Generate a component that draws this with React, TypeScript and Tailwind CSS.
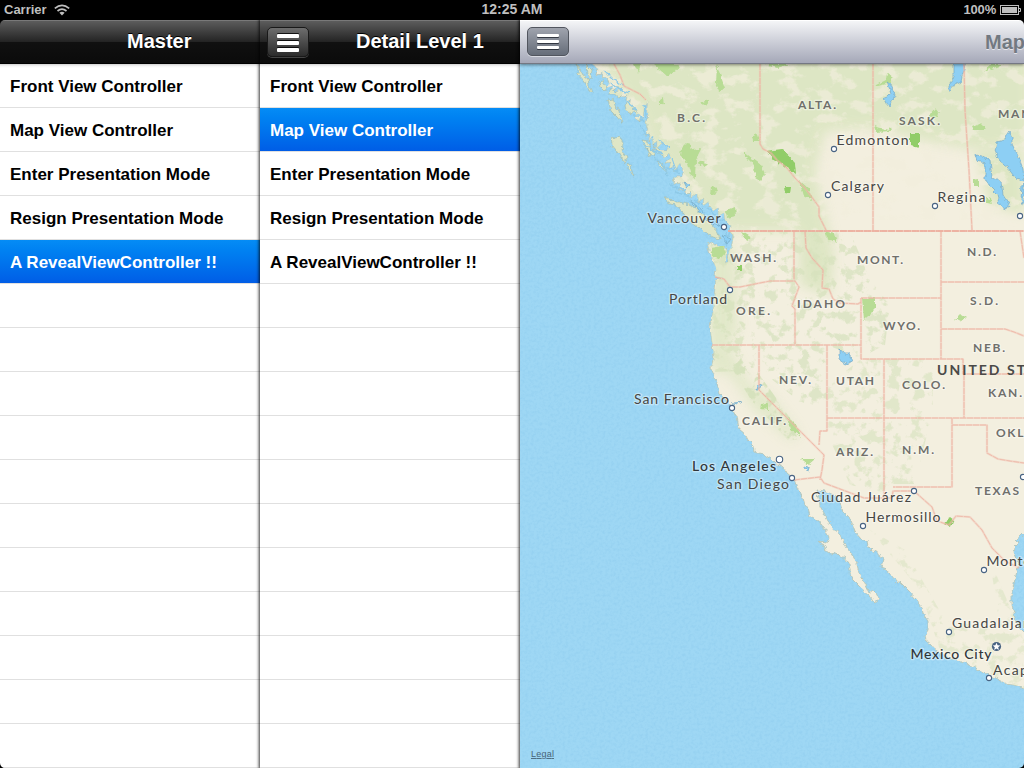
import React from "react";

const rows = [
  "Front View Controller",
  "Map View Controller",
  "Enter Presentation Mode",
  "Resign Presentation Mode",
  "A RevealViewController !!",
];

function MenuGlyph({ dark }: { dark?: boolean }) {
  return (
    <span
      className={
        dark
          ? "flex h-[30px] w-[42px] flex-col items-center justify-center gap-[3px] rounded-[5px] border border-[#191919] bg-gradient-to-b from-[#6e6e6e] to-[#2c2c2c] pt-[1px] shadow-[0_1px_0_#444]"
          : "mb-[2px] flex h-[29px] w-[42px] flex-col items-center justify-center gap-[3px] rounded-[5px] border border-[#52565f] bg-gradient-to-b from-[#a0a4ae] to-[#666d79] shadow-[0_1px_0_#d8dae2]"
      }
    >
      {[0, 1, 2].map((i) => (
        <span
          key={i}
          className={
            dark
              ? "h-[4px] w-[22px] rounded-[1px] bg-white shadow-[0_-1px_0_rgba(0,0,0,0.8)]"
              : "h-[3px] w-[22px] rounded-[1px] bg-white shadow-[0_1px_0_rgba(30,35,45,0.8)]"
          }
        />
      ))}
    </span>
  );
}

function Table({ selected }: { selected: number }) {
  return (
    <div className="flex flex-1 flex-col overflow-hidden bg-[linear-gradient(#d0d0d0_0px,#f4f4f4_2px,#ffffff_4px)]">
      {Array.from({ length: 16 }, (_, i) => (
        <div
          key={i}
          className={
            i === selected
              ? "flex h-[44px] shrink-0 items-center border-b border-[#e0e0e0] bg-gradient-to-b from-[#058cf5] to-[#015de6] pl-[10px] text-[17px] font-bold text-white"
              : "flex h-[44px] shrink-0 items-center border-b border-[#e0e0e0] pl-[10px] text-[17px] font-bold text-black"
          }
        >
          <span className="whitespace-nowrap pt-[2px] leading-[20px]">{rows[i] ?? ""}</span>
        </div>
      ))}
    </div>
  );
}

type Label = [string, number, number, number];

const regions: Label[] = [
  ["B.C.", 677, 121.5, 28],
  ["ALTA.", 798, 108.5, 38],
  ["SASK.", 899, 124.5, 41],
  ["MAN.", 998, 117.5, 37],
  ["WASH.", 730, 261.5, 46],
  ["MONT.", 857, 263.5, 46],
  ["N.D.", 967, 255.5, 29],
  ["S.D.", 970, 304.5, 28],
  ["ORE.", 736, 314.5, 34],
  ["IDAHO", 797, 307.5, 48],
  ["WYO.", 883, 329.5, 37],
  ["NEB.", 973, 351.5, 32],
  ["NEV.", 779, 384, 32],
  ["UTAH", 836, 384.5, 38],
  ["COLO.", 902, 388.5, 43],
  ["KAN.", 988, 396.5, 34],
  ["CALIF.", 742, 424.5, 44],
  ["OKLA.", 996, 436.5, 42],
  ["ARIZ.", 836, 455.5, 37],
  ["N.M.", 902, 453.5, 32],
  ["TEXAS", 975, 494.5, 44],
];

const cities: Label[] = [
  ["Edmonton", 836.5, 145, 72],
  ["Calgary", 831, 190.5, 53],
  ["Regina", 937.5, 202, 48],
  ["Vancouver", 647.5, 223, 73],
  ["Portland", 669, 304, 58],
  ["San Francisco", 634, 403.5, 95],
  ["San Diego", 717, 489, 72],
  ["Ciudad Juárez", 811, 501.5, 100],
  ["Hermosillo", 865.5, 522, 75],
  ["Monterrey", 986.5, 566, 72],
  ["Guadalajara", 952, 628, 84],
  ["Acapulco", 993, 674.5, 66],
];

const bigCities: Label[] = [
  ["Los Angeles", 692, 471, 84],
  ["Mexico City", 910.5, 659, 81],
];

const dots: [number, number][] = [
  [834, 149], [828, 195], [935, 206], [1020, 216], [724, 227], [730, 290],
  [732, 408], [792, 478], [914, 491], [863, 526], [984, 570], [949, 632],
  [989, 678], [1023, 477],
];

const LAND =
  "M592 64 598 69 597 74 603 73 602 79 607 77 609 83 607 88 613 85 612 91 618 86 617 93 623 91 621 97 627 95 626 102 631 99 629 107 634 105 632 113 637 110 635 118 639 121 643 118 644 109 648 101 647 111 649 117 645 122 648 129 645 135 650 134 649 141 653 137 652 145 657 141 657 148 662 143 668 146 667 151 661 151 664 158 669 153 671 158 665 163 671 162 669 169 675 165 674 172 680 163 684 171 682 177 674 177 673 184 681 183 678 190 684 189 687 195 691 191 691 198 697 193 698 202 704 198 703 206 708 202 713 211 719 207 718 216 724 213 725 221 731 226 730 232 733 235 732 245 729 251 728 262 725 263 727 250 724 247 718 246 713 244 707 242 709 250 712 258 716 268 715 277 723 278 716 280 714 300 713 312 710 327 712 343 714 357 711 368 714 375 717 383 719 393 725 399 730 404 733 413 737 416 738 422 739 429 745 434 748 440 753 445 754 452 763 454 771 459 776 464 783 467 788 474 794 479 797 488 803 498 805 505 808 509 810 516 818 520 824 528 829 537 827 543 818 542 825 546 826 551 830 554 836 553 840 557 844 557 849 563 851 578 857 584 861 588 869 595 874 603 879 599 876 593 873 590 869 593 864 582 859 573 857 564 853 556 847 548 844 542 840 535 833 527 828 521 824 513 820 506 819 497 817 490 824 491 834 495 840 502 843 512 849 517 852 524 855 532 861 539 867 541 868 546 873 551 880 554 883 560 881 567 887 569 892 576 897 582 900 582 909 591 917 600 922 607 923 614 928 621 928 630 925 635 926 641 931 645 934 649 947 657 961 661 971 665 984 673 997 679 1006 684 1014 685 1028 690V636L1019 627 1015 617 1012 606 1012 592 1016 575 1019 563 1014 552 1015 547 1019 543 1016 540 1028 530V60H592Z";

const ISLANDS =
  "M576 64 580 69 583 75 588 79 589 85 592 93 590 92 585 82 578 74 578 69ZM586 64 592 70 591 79 587 74ZM599 82 603 81 607 87 604 91 600 87ZM608 94 612 89 616 93 622 88 624 93 619 98 614 94ZM608 100 613 99 616 107 620 112 622 123 617 117 611 111ZM625 104 630 101 634 110 632 114 626 110ZM635 108 640 115 641 121 636 117ZM611 137 616 138 621 137 623 144 622 151 627 158 625 163 618 152 612 145ZM642 140 648 141 652 150 656 149 654 157 648 152ZM646 150 651 154 650 157ZM653 144 659 149 664 154 661 157ZM657 161 662 163 667 173 661 168ZM665 198 670 198 674 202 680 202 688 204 696 208 701 214 709 220 713 227 718 233 720 239 713 237 703 232 697 226 688 220 682 211 674 205 667 203ZM629 163 631 169 634 175 632 174 627 166Z";

const BORDERS =
  "M614 64 620 75 624 86 632 90 640 94 646 100M760 64V144L763 149 771 153 777 160 787 168 795 178 804 187 811 196 819 207 819 216 826 230M873 64V230M964 64 965 110 969 170 972 230M728 231H1024M794 231V280M805 231 806 248 812 258 823 270 822 288 829 289 833 299 840 303 858 304 861 302M715 277 724 279 730 287 740 287 770 281 795 281 799 287 792 306 795 309V344M712 345H861M861 298V359H963V374H1024M861 298H941M941 231V359M941 282H1024M941 329H1005L1014 332 1024 336M759 345V390L824 455 822 470 820 480M827 345V431H820L819 445M884 359V501M827 418H1024M952 418V487H893M952 425H987V453L998 459 1010 461 1024 463M964 374V418M1020 231 1024 258M794 480 820 477 824 483 864 498 892 498 893 491 914 491 932 507 937 521 949 525 956 516 970 517 982 530 992 548 1005 561 1019 568";

const GREEN_PARKS =
  "M634 64H641L638 73ZM653 64H680L676 71 667 76 660 70ZM682 148 686 144 691 145 692 150 701 149 696 159 695 178 691 175 688 165 681 156ZM698 161 707 163 706 166 699 165ZM744 152 761 165 765 174 760 180 755 177 754 166 744 156ZM711 186 718 190 715 195 710 194ZM717 65 721 77 725 88 719 91 716 83ZM701 103 711 99 706 106ZM725 211 735 207 736 216 727 218ZM751 137 758 134 760 141 752 141ZM660 100 663 98 664 104 660 105ZM765 64 790 64 777 68ZM874 86 886 80 887 72 893 77 890 83 878 86ZM874 126 888 130 890 127 891 131 876 132ZM930 114 935 108 939 113 938 118 929 117ZM972 126 980 123 987 130 974 130ZM983 72 992 64 1004 64ZM973 180 979 179 979 186 973 186ZM986 197 991 199 992 204 987 203ZM799 180 809 189 812 200 804 196ZM825 231 834 234 837 243 827 238ZM711 248 723 246 726 252 720 259 713 258ZM741 231 752 238 747 241ZM762 404 768 402 768 410 761 409ZM788 417 797 426 801 437 791 430ZM800 459 815 459 808 465ZM862 298H875V309L864 320ZM955 319 960 314 966 318 961 322Z";

const BRIGHT_PARKS =
  "M766 151 782 149 795 163 796 174 789 169 781 163 772 159ZM910 134H919V148L910 145ZM784 187 791 187 790 194 785 193ZM944 523 948 521 949 517 953 520 954 524 949 527ZM737 266 742 266 742 270 737 270Z";

const LAKES =
  "M887 82 891 85 895 95 892 101 889 108 886 101 882 99 887 97 891 93ZM954 62H967L962 76 961 82 953 86 949 93 949 84 954 78ZM997 142 1004 140 1007 134 1009 131 1012 137 1012 144 1019 158 1023 169 1024 181 1016 179 1008 168 1000 162 995 151ZM975 155 983 156 990 161 992 177 1001 181 1003 195 1010 206 1005 209 999 205 997 194 989 186 985 178 985 163 977 161ZM1022 185 1024 183V207L1021 200ZM839 350 845 353 849 353 852 362 846 364 839 359ZM758 384 761 385 760 389 757 389ZM732 403 743 402 738 404ZM804 466 810 468 809 471 804 468ZM684 182 690 186 687 188ZM690 200 701 208 705 213 700 212ZM703 216 714 220 719 225 710 223ZM721 235 731 239 728 243Z";

const INLETS =
  "M624 99 629 104 637 110M632 116 640 116 644 122M640 126 648 136 654 139M645 144 654 151 663 154M654 157 662 165 668 176M667 168 680 173M670 185 686 190M675 192 690 196M695 200 702 205M707 207 717 218 729 223M718 225 724 229 729 241M604 70 613 79 623 85M610 83 619 90 629 93M644 105 647 120M658 139 669 148M672 158 677 172M730 229 726 246";

function MapLabels({ items, kind }: { items: Label[]; kind: "region" | "city" | "big" }) {
  const cls =
    kind === "region"
      ? "fill-[#6f6f6b] text-[12px] font-bold"
      : kind === "city"
        ? "fill-[#464644] text-[14px] font-normal"
        : "fill-[#30363a] text-[14px] font-medium";
  return (
    <g
      className={cls}
      fontFamily="Lato, 'Noto Sans', sans-serif"
      stroke="#fff"
      strokeOpacity="0.4"
      strokeWidth="2.5"
      strokeLinejoin="round"
      paintOrder="stroke"
    >
      {items.map(([t, x, y, w]) => (
        <text key={t} x={x} y={y} textLength={w} lengthAdjust="spacing">
          {t}
        </text>
      ))}
    </g>
  );
}

function MapView() {
  return (
    <svg viewBox="520 64 504 704" className="block h-[704px] w-[504px]">
      <defs>
        <clipPath id="land">
          <path d={LAND} />
        </clipPath>
        <filter id="coast" filterUnits="userSpaceOnUse" x="500" y="44" width="560" height="724">
          <feTurbulence type="fractalNoise" baseFrequency="0.22" numOctaves="2" seed="7" result="n" />
          <feDisplacementMap in="SourceGraphic" in2="n" scale="5" xChannelSelector="R" yChannelSelector="G" />
        </filter>
        <filter id="grain" filterUnits="userSpaceOnUse" x="520" y="64" width="504" height="704" colorInterpolationFilters="sRGB">
          <feTurbulence type="fractalNoise" baseFrequency="0.35" numOctaves="3" seed="2" />
          <feColorMatrix values="0 0 0 0 0.42  0 0 0 0 0.7  0 0 0 0 0.88  2.5 0 0 0 -1" />
        </filter>
        <filter id="forest" filterUnits="userSpaceOnUse" x="520" y="64" width="504" height="704" colorInterpolationFilters="sRGB">
          <feTurbulence type="fractalNoise" baseFrequency="0.09" numOctaves="5" seed="11" />
          <feColorMatrix values="0 0 0 0 0.84  0 0 0 0 0.885  0 0 0 0 0.74  8 0 0 0 -4.15" result="n" />
          <feComposite in="n" in2="SourceGraphic" operator="in" />
        </filter>
        <filter id="cream" filterUnits="userSpaceOnUse" x="520" y="64" width="504" height="704" colorInterpolationFilters="sRGB">
          <feTurbulence type="fractalNoise" baseFrequency="0.05 0.07" numOctaves="6" seed="23" />
          <feColorMatrix values="0 0 0 0 0.95  0 0 0 0 0.935  0 0 0 0 0.865  7 0 0 0 -3.6" result="n" />
          <feComposite in="n" in2="SourceGraphic" operator="in" />
        </filter>
        <filter id="soft" x="-20%" y="-20%" width="140%" height="140%">
          <feGaussianBlur stdDeviation="6" />
        </filter>
      </defs>
      <rect x="520" y="64" width="504" height="704" fill="#9ed7f4" />
      <rect x="520" y="64" width="504" height="704" filter="url(#grain)" opacity="0.14" />
      <g filter="url(#coast)">
        <path d={LAND} fill="#f3efdf" stroke="#b3c3b4" strokeWidth="0.8" />
        <path d={ISLANDS} fill="#dfe6c6" stroke="#9db9ac" strokeWidth="0.6" />
      </g>
      <g clipPath="url(#land)">
        <path d="M590 55H1030V145L980 150 930 142 875 128 825 131 815 170 828 228 834 255 830 295 800 285 798 231 732 231 700 205 655 155 640 115Z" fill="#dbe5c1" opacity="0.9" filter="url(#soft)" />
        <path d="M975 150H1024V215L990 205Z" fill="#dde6c3" filter="url(#soft)" />
        <path d="M708 240 735 245 738 330 728 345 750 385 770 395 800 435 790 440 755 410 730 375 710 370Z" fill="#dfe7c6" opacity="0.85" filter="url(#soft)" />
        <path d="M590 64H1024V220H822L825 231H728L640 130Z" filter="url(#cream)" opacity="0.7" />
        <path d="M708 231H850L870 280 890 305 885 345 860 358 827 345V400L810 410 760 370 715 372Z" filter="url(#forest)" opacity="0.7" />
        <path d="M861 359H933V410L915 484H890L882 492 850 485 828 435 828 385Z" filter="url(#forest)" opacity="0.6" />
        <path d="M870 530 905 550 945 620 1000 630 990 560 1024 640V690L940 650 920 590Z" filter="url(#forest)" opacity="0.5" />
        <path d="M724 355 747 358 774 395 805 440 788 440 751 400Z" filter="url(#forest)" />
      </g>
      <g filter="url(#coast)">
        <path d={GREEN_PARKS} fill="#b8dc95" />
        <path d={BRIGHT_PARKS} fill="#91cd67" />
        <path d={INLETS} fill="none" stroke="#8ecae8" strokeWidth="1.4" />
        <path d={LAKES} fill="#8dcff4" stroke="#79abc4" strokeWidth="0.7" />
      </g>
      <path d={BORDERS} fill="none" stroke="#f2bcae" strokeOpacity="0.45" strokeWidth="2.2" strokeLinejoin="round" />
      <path d={BORDERS} fill="none" stroke="#ecac9c" strokeOpacity="0.7" strokeWidth="0.9" strokeDasharray="6 1" />
      <path d="M728 231H1024" stroke="#ecab9b" strokeWidth="1.6" strokeDasharray="7 1" />

      <MapLabels items={regions} kind="region" />
      <MapLabels items={cities} kind="city" />
      <MapLabels items={bigCities} kind="big" />
      <text x="937" y="374.5" textLength="128" className="fill-[#4a4a48] text-[14px] font-bold" fontFamily="Lato, sans-serif">
        UNITED STATES
      </text>
      {dots.map(([x, y]) => (
        <circle key={`${x}-${y}`} cx={x} cy={y} r="2.6" fill="#fff" stroke="#486383" strokeWidth="1.1" />
      ))}
      <circle cx="779.5" cy="459.5" r="3.2" fill="#fff" stroke="#486383" strokeWidth="1.1" />
      <circle cx="996.5" cy="646.5" r="4.6" fill="#486383" />
      <path d="m996.5 642.8 1.1 2.5 2.7.2-2.1 1.8.7 2.6-2.4-1.4-2.4 1.4.7-2.6-2.1-1.8 2.7-.2Z" fill="#fff" />
      <text x="531" y="757" textLength="23" className="fill-[#476477] text-[9px] underline" fontFamily="'Liberation Sans', sans-serif">
        Legal
      </text>
    </svg>
  );
}

const darkBar =
  "flex h-[44px] shrink-0 items-center border-t border-b border-t-[#797979] border-b-black bg-[linear-gradient(#5c5c5c_0%,#242424_49%,#101010_51%,#0b0b0b_100%)]";

export default function App() {
  return (
    <div className="flex h-[768px] w-[1024px] flex-col overflow-hidden bg-black font-['Liberation_Sans',Arial,sans-serif]">
      <header className="grid h-[20px] shrink-0 grid-cols-3 items-center text-[13px] font-bold leading-[18px] text-[#bfbfbf]">
        <div className="flex items-center gap-[7px] pb-[1px] pl-[4px]">
          <span>Carrier</span>
          <svg viewBox="0 0 16 12" className="h-[12px] w-[16px]" fill="none" stroke="#bfbfbf" strokeWidth="1.7">
            <path d="M.8 4.4Q8-1.6 15.2 4.4M3.5 7Q8 3.4 12.5 7" />
            <path d="M5.4 8.8Q8 6.8 10.6 8.8L8 11.5Z" fill="#bfbfbf" stroke="none" />
          </svg>
        </div>
        <div className="pb-[2px] text-center text-[14px]">12:25 AM</div>
        <div className="flex items-center justify-end gap-[4px] pb-[1px] pr-[3px]">
          <span className="tracking-[-0.2px]">100%</span>
          <svg viewBox="0 0 21 10" className="h-[10px] w-[21px]">
            <rect x=".5" y=".5" width="18" height="9" fill="none" stroke="#bfbfbf" />
            <rect x="2" y="2" width="15" height="6" fill="#bfbfbf" />
            <path d="M19 3.5H20.5V6.5H19" fill="none" stroke="#bfbfbf" />
          </svg>
        </div>
      </header>
      <main className="flex flex-1 overflow-hidden rounded-[5px]">
        <section className="flex w-[260px] shrink-0 flex-col">
          <div className={`${darkBar} pl-[127px]`}>
            <h1 className="whitespace-nowrap pb-[2px] text-[20px] font-bold leading-[24px] text-white [text-shadow:0_-1px_0_#000]">Master</h1>
          </div>
          <Table selected={4} />
        </section>
        <section className="z-10 flex w-[260px] shrink-0 flex-col shadow-[0_0_3px_1px_rgba(0,0,0,0.8)]">
          <div className={`${darkBar} gap-[47px] pl-[7px]`}>
            <MenuGlyph dark />
            <h1 className="whitespace-nowrap pb-[2px] text-[20px] font-bold leading-[24px] text-white [text-shadow:0_-1px_0_#000]">Detail Level 1</h1>
          </div>
          <Table selected={1} />
        </section>
        <section className="z-20 flex w-[504px] shrink-0 flex-col shadow-[0_0_3px_1px_rgba(0,0,0,0.8)]">
          <div className="z-10 flex h-[44px] shrink-0 items-center justify-between overflow-hidden border-t border-b border-t-white border-b-[#747883] bg-gradient-to-b from-[#f4f5f7] to-[#a5a8b8] pl-[7px] shadow-[0_1px_3px_rgba(0,0,0,0.45)]">
            <MenuGlyph />
            <h1 className="w-[39px] whitespace-nowrap text-[20px] font-bold leading-[24px] text-[#727981] [text-shadow:0_1px_0_rgba(255,255,255,0.6)]">
              Map View
            </h1>
          </div>
          <MapView />
        </section>
      </main>
    </div>
  );
}
